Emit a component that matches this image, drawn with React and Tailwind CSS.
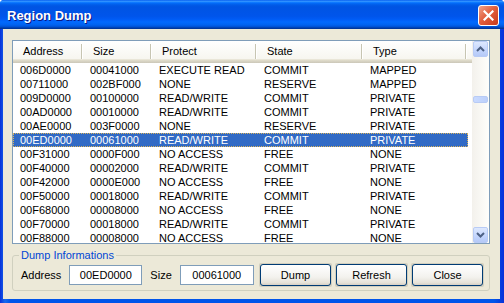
import * as React from "react";

const rows = [
  ["006D0000", "00041000", "EXECUTE READ", "COMMIT", "MAPPED"],
  ["00711000", "002BF000", "NONE", "RESERVE", "MAPPED"],
  ["009D0000", "00100000", "READ/WRITE", "COMMIT", "PRIVATE"],
  ["00AD0000", "00010000", "READ/WRITE", "COMMIT", "PRIVATE"],
  ["00AE0000", "003F0000", "NONE", "RESERVE", "PRIVATE"],
  ["00ED0000", "00061000", "READ/WRITE", "COMMIT", "PRIVATE"],
  ["00F31000", "0000F000", "NO ACCESS", "FREE", "NONE"],
  ["00F40000", "00002000", "READ/WRITE", "COMMIT", "PRIVATE"],
  ["00F42000", "0000E000", "NO ACCESS", "FREE", "NONE"],
  ["00F50000", "00018000", "READ/WRITE", "COMMIT", "PRIVATE"],
  ["00F68000", "00008000", "NO ACCESS", "FREE", "NONE"],
  ["00F70000", "00018000", "READ/WRITE", "COMMIT", "PRIVATE"],
  ["00F88000", "00008000", "NO ACCESS", "FREE", "NONE"],
];

const headers = ["Address", "Size", "Protect", "State", "Type"];
const widths = ["w-[70px]", "w-[69px]", "w-[105px]", "w-[106px]", "w-[104px]"];
const SELECTED = 5;

function ScrollButton({ up }) {
  return (
    <div className="h-[16px] mx-px rounded-[2px] border border-[#b8cbf5] bg-[linear-gradient(to_bottom,#dde8fe,#c3d5fd_60%,#b5c9f7)] flex items-center justify-center">
      <svg width="9" height="6" viewBox="0 0 9 6">
        <path
          d={up ? "M1 5 L4.5 1.5 L8 5" : "M1 1 L4.5 4.5 L8 1"}
          fill="none"
          stroke="#4d6185"
          strokeWidth="2"
        />
      </svg>
    </div>
  );
}

function Button({ children }) {
  return (
    <div className="p-px bg-[#d2cfbf] rounded-[2px]">
      <div className="w-[71px] h-[22px] rounded-[3px] border border-[#003c74] bg-[linear-gradient(to_bottom,#ffffff,#f3f2ee_60%,#e6e3d9_88%,#d6d0c5)] flex items-center justify-center text-black">
        {children}
      </div>
    </div>
  );
}

export default function App() {
  return (
    <div className="w-[504px] h-[303px] flex flex-col bg-[#0055ea] rounded-t-[4px] overflow-hidden font-['Tahoma','Liberation_Sans',sans-serif] text-[11px] text-black">
      {/* Title bar */}
      <div className="h-[29px] shrink-0 flex items-center pt-[2px] pl-[7px] pr-[5px] bg-[linear-gradient(to_bottom,#0058ee_0%,#3593ff_4%,#288eff_6%,#127dff_8%,#036ffc_10%,#0262ee_14%,#0057e5_20%,#0054e3_24%,#0055eb_56%,#005bf5_66%,#026afe_76%,#0062ef_86%,#0052d6_92%,#0040ab_96%,#003092_100%)]">
        <span className="flex-1 text-white font-bold text-[13px] font-['Liberation_Sans',sans-serif] [text-shadow:1px_1px_0_#0a1883]">
          Region Dump
        </span>
        <div className="w-[21px] h-[21px] rounded-[3px] border border-white bg-[linear-gradient(135deg,#f1a28a,#e2603f_45%,#c8391a)] flex items-center justify-center">
          <svg width="11" height="11" viewBox="0 0 11 11">
            <path d="M1.5 1.5 L9.5 9.5 M9.5 1.5 L1.5 9.5" stroke="#fff" strokeWidth="2.2" strokeLinecap="square" />
          </svg>
        </div>
      </div>

      {/* Frame + body */}
      <div className="flex-1 flex flex-col pl-[3px] pr-[4px] pb-[4px] bg-[linear-gradient(to_right,#0831d9,#166aee_1%,#0055ea_2%,#0055ea_98%,#0831d9)]">
        <div className="flex-1 flex flex-col bg-[#ece9d8] pl-[9px] pr-[10px] pt-[11px]">
          {/* List view */}
          <div className="h-[204px] border border-[#7f9db9] bg-white flex overflow-hidden">
            <div className="flex-1 overflow-hidden">
              <div className="h-[22px] flex bg-[linear-gradient(to_bottom,#ffffff_0%,#f7f6f0_80%,#e2decd_86%,#d6d2c2_93%,#cbc7b8_100%)]">
                {headers.map((h, i) => (
                  <div key={h} className={`${widths[i]} flex items-center pb-[2px]`}>
                    <span className="flex-1 pl-[10px]">{h}</span>
                    <span className="h-[15px] w-[2px] border-l border-[#c7c5b2] border-r border-r-white" />
                  </div>
                ))}
              </div>
              {rows.map((r, ri) => (
                <div
                  key={ri}
                  className={
                    ri === SELECTED
                      ? "w-[455px] h-[14px] flex bg-[#316ac5] text-white outline-1 outline-dotted outline-offset-[-1px] outline-[#d9b25a]"
                      : "w-[455px] h-[14px] flex"
                  }
                >
                  {r.map((c, ci) => (
                    <div key={ci} className={`${widths[ci]} pl-[7px] leading-[14px] whitespace-nowrap`}>
                      {c}
                    </div>
                  ))}
                </div>
              ))}
            </div>
            {/* Scrollbar */}
            <div className="w-[17px] flex flex-col bg-[linear-gradient(to_right,#f3f1ec,#fefefb)]">
              <ScrollButton up />
              <div className="flex-1 pt-[39px]">
                <div className="h-[7px] mx-px rounded-[2px] border border-[#b8cbf5] bg-[linear-gradient(to_right,#c9daff,#bcd0fb)]" />
              </div>
              <ScrollButton />
            </div>
          </div>

          {/* Group box */}
          <fieldset className="mt-[5px] border border-[#d0d0bf] rounded-[3px] pl-[8px] pr-[5px] pt-px pb-[3px]">
            <legend className="-ml-[2px] px-[2px] text-[#0046d5] leading-[13px]">Dump Informations</legend>
            <div className="flex items-center h-[24px]">
              <span>Address</span>
              <div className="ml-[8px] w-[73px] h-[20px] border border-[#7f9db9] bg-white flex items-center justify-center">
                00ED0000
              </div>
              <span className="ml-[8px]">Size</span>
              <div className="ml-[8px] w-[74px] h-[20px] border border-[#7f9db9] bg-white flex items-center justify-center">
                00061000
              </div>
              <div className="ml-auto flex gap-[3px]">
                <Button>Dump</Button>
                <Button>Refresh</Button>
                <Button>Close</Button>
              </div>
            </div>
          </fieldset>
        </div>
      </div>
    </div>
  );
}
